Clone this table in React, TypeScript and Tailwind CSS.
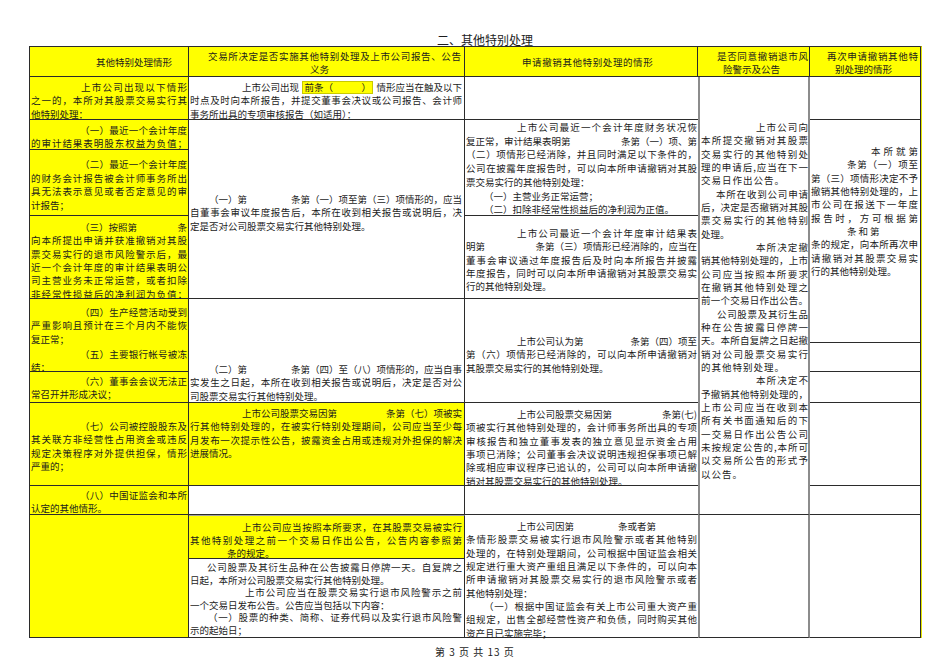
import React from 'react';

const J = 'text-justify [text-align-last:justify]';

const Ln = ({ children, full, className = '' }: { children: React.ReactNode; full?: boolean; className?: string }) => (
  <div className={`${full ? J : ''} ${className}`}>{children}</div>
);

const Split = ({ a, b, className = '' }: { a: React.ReactNode; b: React.ReactNode; className?: string }) => (
  <div className={`flex justify-between ${className}`}>
    <span>{a}</span>
    <span>{b}</span>
  </div>
);

const cell = 'border-r border-b border-[#2b2b2b] px-[1px] overflow-visible';
const yel = 'bg-[#ffff00]';

const App = () => {
  return (
    <div className="w-[950px] h-[672px] bg-white text-[#1c1c1c] text-[9.5px] leading-[13.33px] font-['Noto_Sans_CJK_SC','Noto_Sans',sans-serif]">
      <div className="h-[46px] pt-[32px] pl-[437px] text-[12px] leading-[15px]">二、其他特别处理</div>

      <div className="ml-[29px] w-[893px] border-l border-t border-[#2b2b2b] border-r-2 border-r-[#e6e600] grid grid-cols-[159px_276px_233px_112px_111px] grid-rows-[30px_43px_30px_66px_83px_44px_29px_31px_83px_29px_44px_79px]">
        {/* header */}
        <div className={`${cell} ${yel} col-start-1 row-start-1 pt-[9px] pl-[66px]`}>其他特别处理情形</div>
        <div className={`${cell} ${yel} col-start-2 row-start-1 pt-[3px] leading-[12.5px]`}>
          <Ln full className="pl-[18px] pr-[2px]">交易所决定是否实施其他特别处理及上市公司报告、公告</Ln>
          <Ln className="pl-[120px]">义务</Ln>
        </div>
        <div className={`${cell} ${yel} col-start-3 row-start-1 pt-[9px] pl-[57px] tracking-[0.6px]`}>申请撤销其他特别处理的情形</div>
        <div className={`${cell} ${yel} col-start-4 row-start-1 pt-[3px] leading-[12.5px]`}>
          <Ln full className="pl-[18px]">是否同意撤销退市风</Ln>
          <Ln className="pl-[24px]">险警示及公告</Ln>
        </div>
        <div className={`${cell} ${yel} col-start-5 row-start-1 pt-[3px] leading-[12.5px]`}>
          <Ln full className="pl-[16px] pr-[1px]">再次申请撤销其他特</Ln>
          <Ln className="pl-[24px]">别处理的情形</Ln>
        </div>

        {/* column 1 */}
        <div className={`${cell} ${yel} col-start-1 row-start-2 pt-[4px]`}>
          <Ln full className="pl-[50px]">上市公司出现以下情形</Ln>
          <Ln full>之一的，本所对其股票交易实行其</Ln>
          <Ln>他特别处理：</Ln>
        </div>
        <div className={`${cell} ${yel} col-start-1 row-start-3 pt-[4px] leading-[12.8px]`}>
          <Ln full className="pl-[49px]">（一）最近一个会计年度</Ln>
          <Ln full>的审计结果表明股东权益为负值；</Ln>
        </div>
        <div className={`${cell} ${yel} col-start-1 row-start-4 pt-[8px] leading-[13.7px]`}>
          <Ln full className="pl-[49px]">（二）最近一个会计年度</Ln>
          <Ln full>的财务会计报告被会计师事务所出</Ln>
          <Ln full>具无法表示意见或者否定意见的审</Ln>
          <Ln>计报告；</Ln>
        </div>
        <div className={`${cell} ${yel} col-start-1 row-start-5 pt-[5px]`}>
          <Split className="pl-[49px]" a="（三）按照第" b="条" />
          <Ln full>向本所提出申请并获准撤销对其股</Ln>
          <Ln full>票交易实行的退市风险警示后，最</Ln>
          <Ln full>近一个会计年度的审计结果表明公</Ln>
          <Ln full>司主营业务未正常运营，或者扣除</Ln>
          <Ln full>非经常性损益后的净利润为负值；</Ln>
        </div>
        <div className={`${cell} ${yel} col-start-1 row-start-6 row-span-2 pt-[7px]`}>
          <Ln full className="pl-[49px]">（四）生产经营活动受到</Ln>
          <Ln full>严重影响且预计在三个月内不能恢</Ln>
          <Ln>复正常；</Ln>
          <Ln full className="pl-[49px] mt-[2px]">（五）主要银行帐号被冻</Ln>
          <Ln>结；</Ln>
        </div>
        <div className={`${cell} ${yel} col-start-1 row-start-8 pt-[3px]`}>
          <Ln full className="pl-[49px]">（六）董事会会议无法正</Ln>
          <Ln>常召开并形成决议；</Ln>
        </div>
        <div className={`${cell} ${yel} col-start-1 row-start-9 pt-[17px]`}>
          <Ln full className="pl-[49px]">（七）公司被控股股东及</Ln>
          <Ln full>其关联方非经营性占用资金或违反</Ln>
          <Ln full>规定决策程序对外提供担保，情形</Ln>
          <Ln>严重的；</Ln>
        </div>
        <div className={`${cell} ${yel} col-start-1 row-start-10 pt-[3px] leading-[12.6px]`}>
          <Ln full className="pl-[49px]">（八）中国证监会和本所</Ln>
          <Ln>认定的其他情形。</Ln>
        </div>
        <div className={`${cell} ${yel} col-start-1 row-start-11 row-span-2`} />

        {/* column 2 */}
        <div className={`${cell} col-start-2 row-start-2 pt-[4px] pr-[2px]`}>
          <div className="flex justify-between pl-[52px] items-center">
            <span>上市公司出现</span>
            <span className="bg-[#ffff00] border border-[#c9c900] leading-[11px] px-[1px]">前条（　　　）</span>
            <span>情形应当在触及以下</span>
          </div>
          <Ln full>时点及时向本所报告，并提交董事会决议或公司报告、会计师</Ln>
          <Ln>事务所出具的专项审核报告（如适用）：</Ln>
        </div>
        <div className={`${cell} col-start-2 row-start-3 row-span-3 pt-[73px] pr-[2px]`}>
          <Split className="pl-[19px]" a="（一）第" b="条第（一）项至第（三）项情形的，应当" />
          <Ln full>自董事会审议年度报告后，本所在收到相关报告或说明后，决</Ln>
          <Ln>定是否对公司股票交易实行其他特别处理。</Ln>
        </div>
        <div className={`${cell} col-start-2 row-start-6 row-span-3 pt-[64px] pr-[2px]`}>
          <Split className="pl-[19px]" a="（二）第" b="条第（四）至（八）项情形的，应当自事" />
          <Ln full>实发生之日起，本所在收到相关报告或说明后，决定是否对公</Ln>
          <Ln>司股票交易实行其他特别处理。</Ln>
        </div>
        <div className={`${cell} ${yel} col-start-2 row-start-9 pt-[4px] pr-[2px]`}>
          <Split className="pl-[52px]" a="上市公司股票交易因第" b="条第（七）项被实" />
          <Ln full>行其他特别处理的，在被实行特别处理期间，公司应当至少每</Ln>
          <Ln full>月发布一次提示性公告，披露资金占用或违规对外担保的解决</Ln>
          <Ln>进展情况。</Ln>
        </div>
        <div className={`${cell} col-start-2 row-start-10`} />
        <div className={`${cell} ${yel} col-start-2 row-start-11 pt-[5px] pr-[2px] leading-[13px] border-t border-t-[#a0a0a0]`}>
          <Ln full className="pl-[52px]">上市公司应当按照本所要求，在其股票交易被实行</Ln>
          <Ln full>其他特别处理之前一个交易日作出公告，公告内容参照第</Ln>
          <Ln className="pl-[37px]">条的规定。</Ln>
        </div>
        <div className={`${cell} col-start-2 row-start-12 pt-[2px] pr-[2px] leading-[12.6px]`}>
          <Ln full className="pl-[17px]">公司股票及其衍生品种在公告披露日停牌一天。自复牌之</Ln>
          <Ln>日起，本所对公司股票交易实行其他特别处理。</Ln>
          <Ln full className="pl-[55px]">上市公司应当在股票交易实行退市风险警示之前</Ln>
          <Ln>一个交易日发布公告。公告应当包括以下内容：</Ln>
          <Ln full className="pl-[18px]">（一）股票的种类、简称、证券代码以及实行退市风险警</Ln>
          <Ln>示的起始日；</Ln>
        </div>

        {/* column 3 */}
        <div className={`${cell} col-start-3 row-start-2 border-r-0`} />
        <div className={`${cell} col-start-3 row-start-3 row-span-2 pt-[1px] leading-[13.7px] border-r-0`}>
          <Ln full className="pl-[51px]">上市公司最近一个会计年度财务状况恢</Ln>
          <Split a="复正常，审计结果表明第" b="条第（一）项、第" />
          <Ln full>（二）项情形已经消除，并且同时满足以下条件的，</Ln>
          <Ln full>公司在披露年度报告时，可以向本所申请撤销对其股</Ln>
          <Ln>票交易实行的其他特别处理：</Ln>
          <Ln className="pl-[18px]">（一）主营业务正常运营；</Ln>
          <Ln className="pl-[18px]">（二）扣除非经常性损益后的净利润为正值。</Ln>
        </div>
        <div className={`${cell} col-start-3 row-start-5 pt-[11px] border-r-0`}>
          <Ln full className="pl-[51px]">上市公司最近一个会计年度审计结果表</Ln>
          <Split a="明第" b="条第（三）项情形已经消除的，应当在" />
          <Ln full>董事会审议通过年度报告后及时向本所报告并披露</Ln>
          <Ln full>年度报告，同时可以向本所申请撤销对其股票交易实</Ln>
          <Ln>行的其他特别处理。</Ln>
        </div>
        <div className={`${cell} col-start-3 row-start-6 row-span-3 pt-[36px] border-r-0`}>
          <Split className="pl-[51px]" a="上市公司认为第" b="条第（四）项至" />
          <Ln full>第（六）项情形已经消除的，可以向本所申请撤销对</Ln>
          <Ln>其股票交易实行的其他特别处理。</Ln>
        </div>
        <div className={`${cell} col-start-3 row-start-9 pt-[5px] border-r-0`}>
          <Split className="pl-[51px]" a="上市公司股票交易因第" b="条第(七)" />
          <Ln full>项被实行其他特别处理的，会计师事务所出具的专项</Ln>
          <Ln full>审核报告和独立董事发表的独立意见显示资金占用</Ln>
          <Ln full>事项已消除；公司董事会决议说明违规担保事项已解</Ln>
          <Ln full>除或相应审议程序已追认的，公司可以向本所申请撤</Ln>
          <Ln>销对其股票交易实行的其他特别处理。</Ln>
        </div>
        <div className={`${cell} col-start-3 row-start-10 border-r-0`} />
        <div className={`${cell} col-start-3 row-start-11 row-span-2 pt-[5px] border-r-0`}>
          <div className="pl-[51px]">
            上市公司因第<span className="ml-[44px]">条或者第</span>
          </div>
          <Ln full>条情形股票交易被实行退市风险警示或者其他特别</Ln>
          <Ln full>处理的，在特别处理期间，公司根据中国证监会相关</Ln>
          <Ln full>规定进行重大资产重组且满足以下条件的，可以向本</Ln>
          <Ln full>所申请撤销对其股票交易实行的退市风险警示或者</Ln>
          <Ln>其他特别处理：</Ln>
          <Ln full className="pl-[18px]">（一）根据中国证监会有关上市公司重大资产重</Ln>
          <Ln full>组规定，出售全部经营性资产和负债，同时购买其他</Ln>
          <Ln>资产且已实施完毕；</Ln>
        </div>

        {/* column 4 */}
        <div className="col-start-4 row-start-2 row-span-9 border-x-2 border-b border-x-[#8c8c8c] border-b-[#2b2b2b] pl-[1px] pt-[44px]">
          <Ln full className="pl-[55px]">上市公司向</Ln>
          <Ln full>本所提交撤销对其股票</Ln>
          <Ln full>交易实行的其他特别处</Ln>
          <Ln full>理的申请后,应当在下一</Ln>
          <Ln className="tracking-[1px]">交易日作出公告。</Ln>
          <Ln full className="pl-[15px]">本所在收到公司申请</Ln>
          <Ln full>后，决定是否撤销对其股</Ln>
          <Ln full>票交易实行的其他特别</Ln>
          <Ln>处理。</Ln>
          <Ln full className="pl-[55px]">本所决定撤</Ln>
          <Ln full>销其他特别处理的，上市</Ln>
          <Ln full>公司应当按照本所要求</Ln>
          <Ln full>在撤销其他特别处理之</Ln>
          <Ln full>前一个交易日作出公告。</Ln>
          <Ln full className="pl-[16px]">公司股票及其衍生品</Ln>
          <Ln full>种在公告披露日停牌一</Ln>
          <Ln full>天。本所自复牌之日起撤</Ln>
          <Ln full>销对公司股票交易实行</Ln>
          <Ln className="tracking-[1px]">的其他特别处理。</Ln>
          <Ln full className="pl-[55px]">本所决定不</Ln>
          <Ln full>予撤销其他特别处理的，</Ln>
          <Ln full>上市公司应当在收到本</Ln>
          <Ln full>所有关书面通知后的下</Ln>
          <Ln full>一交易日作出公告公司</Ln>
          <Ln full>未按规定公告的,本所可</Ln>
          <Ln full>以交易所公告的形式予</Ln>
          <Ln className="tracking-[1px]">以公告。</Ln>
        </div>
        <div className="col-start-4 row-start-11 row-span-2 border-x-2 border-b border-x-[#8c8c8c] border-b-[#2b2b2b]" />

        {/* column 5 */}
        <div className={`${cell} col-start-5 row-start-2`} />
        <div className={`${cell} col-start-5 row-start-3 row-span-4 pt-[25px] pr-[2px]`}>
          <Ln full className="pl-[60px]">本所就第</Ln>
          <Ln full className="pl-[36px]">条第（一）项至</Ln>
          <Ln full>第（三）项情形决定不予</Ln>
          <Ln full>撤销其他特别处理的，上</Ln>
          <Ln full>市公司在报送下一年度</Ln>
          <Ln full>报告时，方可根据第</Ln>
          <Ln className="pl-[36px] tracking-[2px]">条和第</Ln>
          <Ln full>条的规定，向本所再次申</Ln>
          <Ln full>请撤销对其股票交易实</Ln>
          <Ln>行的其他特别处理。</Ln>
        </div>
        <div className={`${cell} col-start-5 row-start-7`} />
        <div className={`${cell} col-start-5 row-start-8`} />
        <div className={`${cell} col-start-5 row-start-9`} />
        <div className={`${cell} col-start-5 row-start-10`} />
        <div className={`${cell} col-start-5 row-start-11 row-span-2`} />
      </div>

      <div className="mt-[7px] pl-[435px] text-[10px] leading-[14px] tracking-[1px]">第 3 页 共 13 页</div>
    </div>
  );
};

export default App;
